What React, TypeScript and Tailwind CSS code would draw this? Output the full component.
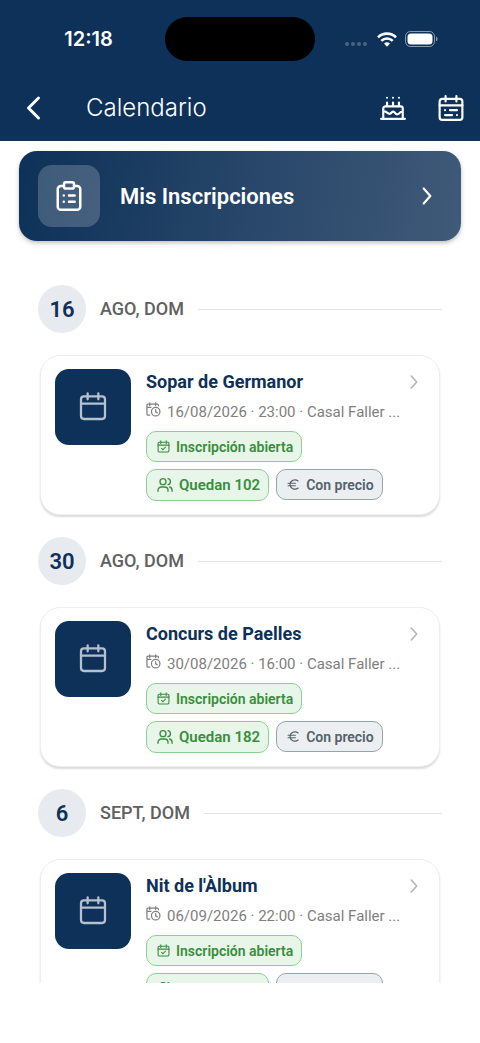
import { ReactNode } from "react";

type IconProps = { className?: string };

function Stroke({ className, width = 1.5, children }: { className?: string; width?: number; children: ReactNode }) {
  return (
    <svg
      aria-hidden="true"
      className={className}
      viewBox="0 0 24 24"
      fill="none"
      stroke="currentColor"
      strokeWidth={width}
      strokeLinecap="round"
      strokeLinejoin="round"
    >
      {children}
    </svg>
  );
}

function CalendarIcon({ className }: IconProps) {
  return (
    <Stroke className={className} width={1.7}>
      <rect x="3" y="4" width="18" height="17" rx="2.2" />
      <path d="M3 9.5h18M8 1.7v4.500M16 1.7v4.500" />
    </Stroke>
  );
}

function CalendarCheckIcon({ className }: IconProps) {
  return (
    <Stroke className={className} width={2}>
      <rect x="2" y="4" width="20" height="18" rx="2.2" />
      <path d="M2 9.5h20M7 1.5v5M17 1.5v5M8.5 15.5l2.5 2.5 4.5-5" />
    </Stroke>
  );
}

function CalendarClockIcon({ className }: IconProps) {
  return (
    <Stroke className={className} width={2}>
      <path d="M6 21H3.500A2 2 0 0 1 1.500 19V5.500a2 2 0 0 1 2-2H18a2 2 0 0 1 2 2V6M1.500 8.500H8M6 1.200v4.500M15.500 1.200v4.500" />
      <circle cx="15.500" cy="15.500" r="6.800" />
      <path d="M15.500 12v3.800l2.500 1.500" />
    </Stroke>
  );
}

function UsersIcon({ className }: IconProps) {
  return (
    <Stroke className={className} width={2}>
      <circle cx="9" cy="7" r="4.500" />
      <path d="M1.500 21.500v-1.500a5 5 0 0 1 5-5h5a5 5 0 0 1 5 5v1.500M16.500 2.500a4.600 4.600 0 0 1 0 9M19 15c2.200.700 3.600 2.500 3.600 4.800v1.700" />
    </Stroke>
  );
}

function EuroIcon({ className }: IconProps) {
  return (
    <Stroke className={className} width={2.2}>
      <path d="M20.500 5.500A9.200 9.200 0 0 0 5.500 12a9.200 9.200 0 0 0 15 6.500M2 9.700h13.500M2 14.300h13.500" />
    </Stroke>
  );
}

function ClipboardIcon({ className }: IconProps) {
  return (
    <Stroke className={className} width={2}>
      <path d="M8 4H5.500A2.500 2.500 0 0 0 3 6.500v14A2.500 2.500 0 0 0 5.500 23h13a2.500 2.500 0 0 0 2.500-2.500v-14A2.500 2.500 0 0 0 18.500 4H16" />
      <rect x="8" y="1" width="8" height="5" rx="1.500" />
      <path d="M7.800 11.500h.010M12 11.500h4.500M7.800 16.500h.010M12 16.500h4.500" />
    </Stroke>
  );
}

function CakeIcon({ className }: IconProps) {
  return (
    <Stroke className={className} width={2}>
      <path d="M1 22h22M3 22V12.500a2 2 0 0 1 2-2h14a2 2 0 0 1 2 2V22M3.500 15c2-.500 3.500 3 5.800 2.300 1.500-.500 1.500-2 2.900-2 1.600 0 1.800 2.700 3.800 2.500 2-.200 2.500-2.800 4.500-2.300M6.500 10.500V7M12 10.500V7M17.500 10.500V7M6.500 2.500h.010M12 2.500h.010M17.500 2.500h.010" />
    </Stroke>
  );
}

function AgendaIcon({ className }: IconProps) {
  return (
    <Stroke className={className} width={2}>
      <rect x="1.500" y="3.500" width="21" height="19.500" rx="2.500" />
      <path d="M1.500 9.500h21M7 1v5M17 1v5M6.500 14h.010M11 14h6.500M6.500 18.500h6.500M17.500 18.500h.010" />
    </Stroke>
  );
}

function ChevronRight({ className, width = 2.4 }: IconProps & { width?: number }) {
  return (
    <Stroke className={className} width={width}>
      <path d="M8 3l8 9-8 9" />
    </Stroke>
  );
}

function WifiIcon({ className }: IconProps) {
  return (
    <svg aria-hidden="true" className={className} viewBox="0 0 20 15" fill="none" stroke="currentColor" strokeWidth="2.600">
      <path d="M1 5.300a12.800 12.800 0 0 1 18 0" />
      <path d="M4.300 8.900a8.100 8.100 0 0 1 11.400 0" />
      <path d="M10 14.800L7 11.600a4.300 4.300 0 0 1 6 0z" fill="currentColor" stroke="none" />
    </svg>
  );
}

function BatteryIcon({ className }: IconProps) {
  return (
    <svg aria-hidden="true" className={className} viewBox="0 0 33 16" fill="none">
      <rect x="0.500" y="0.500" width="29" height="15" rx="5" stroke="currentColor" strokeOpacity="0.500" />
      <rect x="2.500" y="2.500" width="25" height="11" rx="3.500" fill="currentColor" />
      <path d="M31 5.500c2 .800 2 4.200 0 5z" fill="currentColor" fillOpacity="0.500" />
    </svg>
  );
}

function StatusBar() {
  return (
    <div className="grid h-[78px] grid-cols-[1fr_150px_1fr] items-center">
      <time className="pl-3 text-center font-['Inter'] text-xl font-semibold">12:18</time>
      <div className="h-11 rounded-full bg-black" />
      <div className="flex items-center justify-end pr-[42px]">
        <div className="mt-2.5 mr-2.5 flex gap-0.5 text-white/25">
          <span className="size-1 rounded-full bg-current" />
          <span className="size-1 rounded-full bg-current" />
          <span className="size-1 rounded-full bg-current" />
          <span className="size-1 rounded-full bg-current" />
        </div>
        <WifiIcon className="mr-2 h-[15px] w-5" />
        <BatteryIcon className="h-4 w-[33px]" />
      </div>
    </div>
  );
}

function AppBar() {
  return (
    <div className="flex h-[60px] items-center pr-4 pl-5">
      <button type="button" aria-label="Volver" className="flex w-[66px]">
        <svg aria-hidden="true" className="size-7" viewBox="0 0 28 28" fill="none" stroke="currentColor" strokeWidth="3" strokeLinecap="round" strokeLinejoin="round">
          <path d="M18.500 4L8.500 14l10 10" />
        </svg>
      </button>
      <h1 className="flex-1 font-['Inter'] text-2xl font-light">Calendario</h1>
      <div className="flex items-center gap-8">
        <button type="button" aria-label="Cumpleaños"><CakeIcon className="size-[26px]" /></button>
        <button type="button" aria-label="Agenda"><AgendaIcon className="size-[26px]" /></button>
      </div>
    </div>
  );
}

const chipStyles = {
  green: "border-[#8fce93] bg-[#e8f5e9] text-[#388e3c]",
  gray: "border-[#93a4ab] bg-[#eceff1] text-[#53626b]",
};

function Chip({ tone, large, icon, children }: { tone: keyof typeof chipStyles; large?: boolean; icon: ReactNode; children: ReactNode }) {
  return (
    <span className={`flex items-center gap-1.5 rounded-[10px] border pr-2 pl-2.5 font-semibold ${large ? "h-8 text-[15px]" : "h-[31px] text-sm"} ${chipStyles[tone]}`}>
      {icon}
      {children}
    </span>
  );
}

type Event = { day: string; label: string; title: string; details: string; left: number };

const events: Event[] = [
  { day: "16", label: "AGO, DOM", title: "Sopar de Germanor", details: "16/08/2026 · 23:00 · Casal Faller ...", left: 102 },
  { day: "30", label: "AGO, DOM", title: "Concurs de Paelles", details: "30/08/2026 · 16:00 · Casal Faller ...", left: 182 },
  { day: "6", label: "SEPT, DOM", title: "Nit de l'Àlbum", details: "06/09/2026 · 22:00 · Casal Faller ...", left: 150 },
];

function EventSection({ event }: { event: Event }) {
  return (
    <section>
      <div className="flex items-center">
        <span className="flex size-12 items-center justify-center rounded-full bg-[#e7eaee] text-[22px] font-semibold text-[#0d3158]">{event.day}</span>
        <h2 className="mx-3.5 text-lg font-medium text-[#606060]">{event.label}</h2>
        <hr className="flex-1 border-[#e4e4e4]" />
      </div>
      <a href="#" className="mx-0.5 mt-[22px] flex rounded-[20px] border border-[#eeeeee] bg-white px-3.5 py-[13px] shadow-[0_2px_2px_rgba(0,0,0,0.14)]">
        <span className="flex size-[76px] shrink-0 items-center justify-center rounded-[14px] bg-[#0d3158] text-[#b6c1cd]">
          <CalendarIcon className="size-8" />
        </span>
        <div className="ml-[15px] min-w-0 flex-1">
          <div className="flex h-[25px] items-center justify-between">
            <h3 className="text-lg font-bold text-[#0d3158]">{event.title}</h3>
            <ChevronRight className="mr-[3px] size-4 text-[#b5b5b5]" />
          </div>
          <p className="mt-1.5 flex h-6 items-center gap-1.5 text-[15px] whitespace-nowrap text-[#808080]">
            <CalendarClockIcon className="mb-1.5 size-[15px] shrink-0" />
            {event.details}
          </p>
          <div className="mt-[7px] flex flex-wrap items-start gap-[7px]">
            <Chip tone="green" icon={<CalendarCheckIcon className="size-[13px]" />}>Inscripción abierta</Chip>
            <Chip tone="green" large icon={<UsersIcon className="size-4" />}>Quedan {event.left}</Chip>
            <Chip tone="gray" icon={<EuroIcon className="size-[13px]" />}>Con precio</Chip>
          </div>
        </div>
      </a>
    </section>
  );
}

export default function App() {
  return (
    <div className="flex h-screen flex-col bg-white pb-[60px] font-['Roboto',sans-serif]">
      <header className="shrink-0 bg-[#0d3158] pb-[3px] text-white">
        <StatusBar />
        <AppBar />
      </header>
      <main className="min-h-0 flex-1 overflow-y-auto [scrollbar-width:none]">
        <div className="px-[19px] pt-2.5">
          <a href="#" className="flex h-[90px] items-center rounded-[18px] bg-linear-[101deg] from-[#0d3158] to-[#405a79] pr-6 pl-[19px] text-white shadow-[0_2px_4px_rgba(0,0,0,0.25)]">
            <span className="flex size-[62px] items-center justify-center rounded-[14px] bg-white/20">
              <ClipboardIcon className="size-[30px]" />
            </span>
            <span className="ml-5 flex-1 text-[22px] font-semibold">Mis Inscripciones</span>
            <ChevronRight className="size-5" width={2.6} />
          </a>
        </div>
        <div className="flex flex-col gap-[22px] px-[38px] pt-11 pb-5">
          {events.map((event) => (
            <EventSection key={event.day} event={event} />
          ))}
        </div>
      </main>
    </div>
  );
}
